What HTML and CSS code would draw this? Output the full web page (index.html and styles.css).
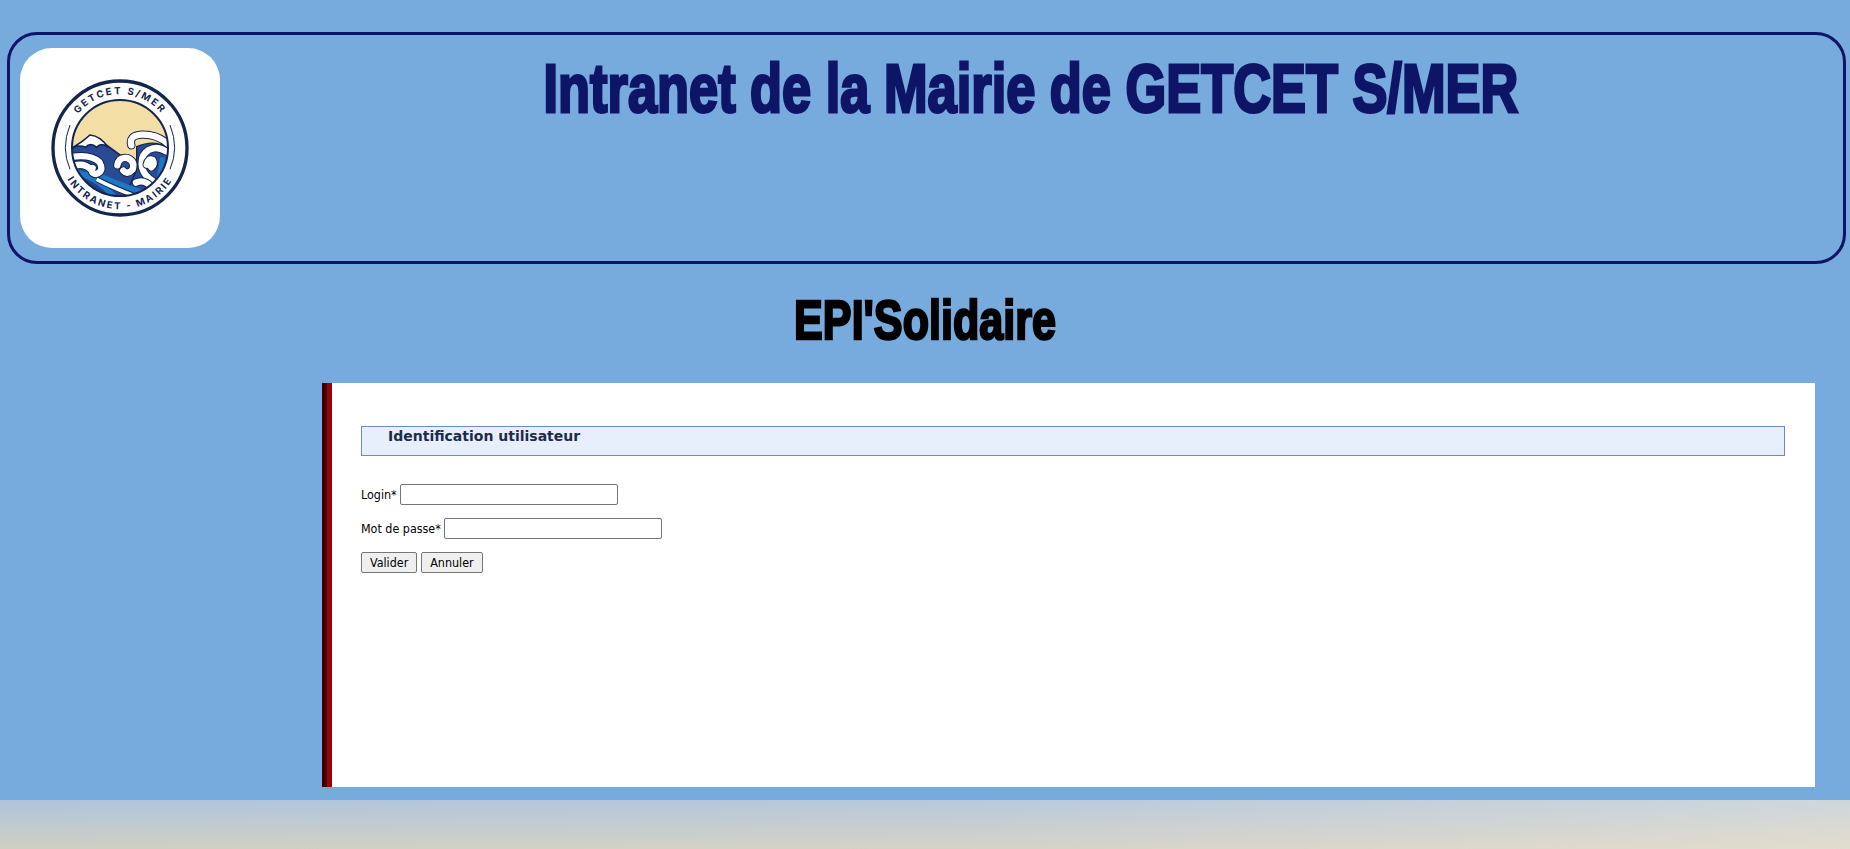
FILE: index.html
```
<!DOCTYPE html>
<html lang="fr">
<head>
<meta charset="utf-8">
<title>Intranet de la Mairie de GETCET S/MER</title>
<link rel="stylesheet" href="styles.css">
</head>
<body>
<div class="page">
  <header class="top">
    <div class="logo-box">
      <svg class="logo" viewBox="0 -6 480 480" aria-label="Logo GETCET S/MER">
        <defs>
          <clipPath id="disc"><circle cx="240" cy="234" r="144"/></clipPath>
          <path id="arcTop" d="M78 234 A162 162 0 0 1 402 234"/>
          <path id="arcBottom" d="M56 234 A184 184 0 0 0 424 234"/>
        </defs>
        <circle cx="240" cy="234" r="201" fill="#fff" stroke="#14264f" stroke-width="10"/>
        <g clip-path="url(#disc)">
          <rect x="90" y="80" width="300" height="310" fill="#f3dfa5"/>
          <path d="M92 240 L150 198 L195 222 L250 262 L330 300 L330 390 L92 390Z" fill="#2b4a96" stroke="#14264f" stroke-width="5"/>
          <path d="M100 232 Q130 214 150 195 Q182 198 204 232 Q184 216 170 232 Q152 216 136 232 Q120 224 100 232Z" fill="#fff" stroke="#14264f" stroke-width="5"/>
          <path d="M290 230 Q350 205 392 240 L392 390 L250 390 L290 300Z" fill="#2b4a96" stroke="#14264f" stroke-width="4"/>
          <path d="M88 300 Q170 310 230 390 L88 390Z" fill="#23408c"/>
          <path d="M96 304 Q176 320 228 388" fill="none" stroke="#1b78c4" stroke-width="17"/>
          <path d="M100 340 Q146 350 176 388" fill="none" stroke="#1b78c4" stroke-width="15"/>
          <path d="M140 300 Q220 340 300 366" fill="none" stroke="#1b78c4" stroke-width="18"/>
          <path d="M170 328 Q220 354 290 380" fill="none" stroke="#14264f" stroke-width="17"/>
          <path d="M170 328 Q220 354 290 380" fill="none" stroke="#fff" stroke-width="11"/>
          <path d="M368 262 Q364 320 338 372" fill="none" stroke="#1b78c4" stroke-width="16"/>
          <path class="foam-line" d="M88 262 Q150 250 178 276 Q194 304 168 312 Q150 310 158 294 M88 292 Q130 274 152 298"/>
          <path class="foam-core" d="M88 262 Q150 250 178 276 Q194 304 168 312 Q150 310 158 294 M88 292 Q130 274 152 298"/>
          <path class="foam-line" d="M274 226 Q266 196 305 194 Q350 192 384 222"/>
          <path class="foam-core" d="M274 226 Q266 196 305 194 Q350 192 384 222"/>
          <path class="foam-line" d="M378 244 Q350 226 326 240 Q300 256 306 292 Q312 318 340 334"/>
          <path class="foam-core" d="M378 244 Q350 226 326 240 Q300 256 306 292 Q312 318 340 334"/>
          <path class="foam-line" d="M232 286 Q236 260 262 264 Q286 274 278 298 Q262 316 250 302"/>
          <path class="foam-core" d="M232 286 Q236 260 262 264 Q286 274 278 298 Q262 316 250 302"/>
          <path class="foam-line" d="M320 284 Q324 264 338 270 Q346 282 334 292"/>
          <path class="foam-core" d="M320 284 Q324 264 338 270 Q346 282 334 292"/>
          <path class="foam-line" d="M288 338 Q312 326 336 352"/>
          <path class="foam-core" d="M288 338 Q312 326 336 352"/>
        </g>
        <circle cx="240" cy="234" r="144" fill="none" stroke="#14264f" stroke-width="6"/>
        <path d="M90 165 Q62 234 90 298 M390 165 Q418 234 390 298" fill="none" stroke="#14264f" stroke-width="3"/>
        <text class="logo-text"><textPath href="#arcTop" startOffset="50%">GETCET S/MER</textPath></text>
        <text class="logo-text"><textPath href="#arcBottom" startOffset="50%">INTRANET - MAIRIE</textPath></text>
      </svg>
    </div>
    <div class="title-slot">
      <h1 class="site-title">Intranet de la Mairie de GETCET S/MER</h1>
    </div>
  </header>
  <div class="app-slot">
    <h2 class="app-title">EPI'Solidaire</h2>
  </div>
  <div class="panel-row">
    <main class="panel">
      <h3 class="section-head">Identification utilisateur</h3>
      <form class="login">
        <div class="field"><label for="login">Login*</label> <input id="login" type="text"></div>
        <div class="field"><label for="pass">Mot de passe*</label> <input id="pass" type="password"></div>
        <div class="actions"><button type="button">Valider</button><button type="button">Annuler</button></div>
      </form>
    </main>
  </div>
</div>
<div class="sand"></div>
</body>
</html>
```
FILE: styles.css
```
html, body { margin: 0; height: 100%; }
body {
  display: flex;
  flex-direction: column;
  overflow: hidden;
  font-family: "DejaVu Sans Condensed", "DejaVu Sans", sans-serif;
  font-size: 12.4px;
  color: #000;
}
.page {
  height: 800px;
  box-sizing: border-box;
  padding-top: 32px;
  background: #77aadd;
}
.top {
  display: flex;
  box-sizing: border-box;
  height: 232px;
  margin: 0 4px 0 7px;
  padding: 13px 10px;
  border: 3px solid #0f1566;
  border-radius: 30px;
}
.logo-box {
  flex: none;
  width: 200px;
  height: 200px;
  display: flex;
  align-items: center;
  justify-content: center;
  background: #fff;
  border-radius: 32px;
}
.logo { width: 160px; height: 160px; display: block; }
.foam-line { fill: none; stroke: #14264f; stroke-width: 25; stroke-linecap: round; }
.foam-core { fill: none; stroke: #fff; stroke-width: 19; stroke-linecap: round; }
.logo-text {
  font-family: "Inter", sans-serif;
  font-size: 29px;
  font-weight: 700;
  letter-spacing: 6px;
  fill: #14264f;
  text-anchor: middle;
}
.title-slot {
  flex: 1;
  display: flex;
  justify-content: center;
  padding: 2px 0 0 8px;
}
.site-title {
  margin: 0;
  white-space: nowrap;
  height: 76px;
  font-family: "Liberation Sans", sans-serif;
  font-size: 68px;
  line-height: 76px;
  font-weight: 700;
  color: #0f1566;
  -webkit-text-stroke: 3px #0f1566;
  transform: scaleX(.77);
}
.app-slot {
  display: flex;
  justify-content: center;
  height: 93px;
  padding-top: 26px;
}
.app-title {
  margin: 0;
  white-space: nowrap;
  height: 60px;
  font-family: "Liberation Sans", sans-serif;
  font-size: 56px;
  line-height: 60px;
  font-weight: 700;
  -webkit-text-stroke: 2.5px #000;
  transform: scaleX(.77);
}
.panel-row { padding: 0 35px 0 322px; }
.panel {
  box-sizing: border-box;
  height: 404px;
  padding: 43px 30px 0 39px;
  background: #fff;
  box-shadow: inset 5px 0 0 #400000, inset 10px 0 0 #990000;
}
.section-head {
  box-sizing: border-box;
  height: 30px;
  margin: 0 0 28px;
  padding: 1px 0 0 26px;
  background: #e8effc;
  border: 1px solid #6a8cc8;
  font-family: "DejaVu Sans", sans-serif;
  font-size: 14px;
  line-height: 16px;
  font-weight: 700;
  color: #1c2b4a;
}
.field { display: flex; align-items: center; gap: 3px; height: 21px; margin-bottom: 13px; }
.field input {
  box-sizing: border-box;
  width: 218px;
  height: 21px;
  margin: 0;
  padding: 0 2px;
  background: #fff;
  border: 1px solid #767676;
  border-radius: 2px;
}
.actions { display: flex; gap: 4px; }
.actions button {
  box-sizing: border-box;
  min-width: 56px;
  height: 21px;
  margin: 0;
  padding: 0 8px;
  font: inherit;
  color: #000;
  background: #efefef;
  border: 1px solid #767676;
  border-radius: 2px;
}
.sand {
  flex: 1;
  background:
    linear-gradient(to right, rgba(255, 240, 220, 0), rgba(255, 240, 220, .1) 50%, rgba(255, 240, 220, .4)),
    linear-gradient(to bottom, #afc4dc, #d0cfc4);
}
```
